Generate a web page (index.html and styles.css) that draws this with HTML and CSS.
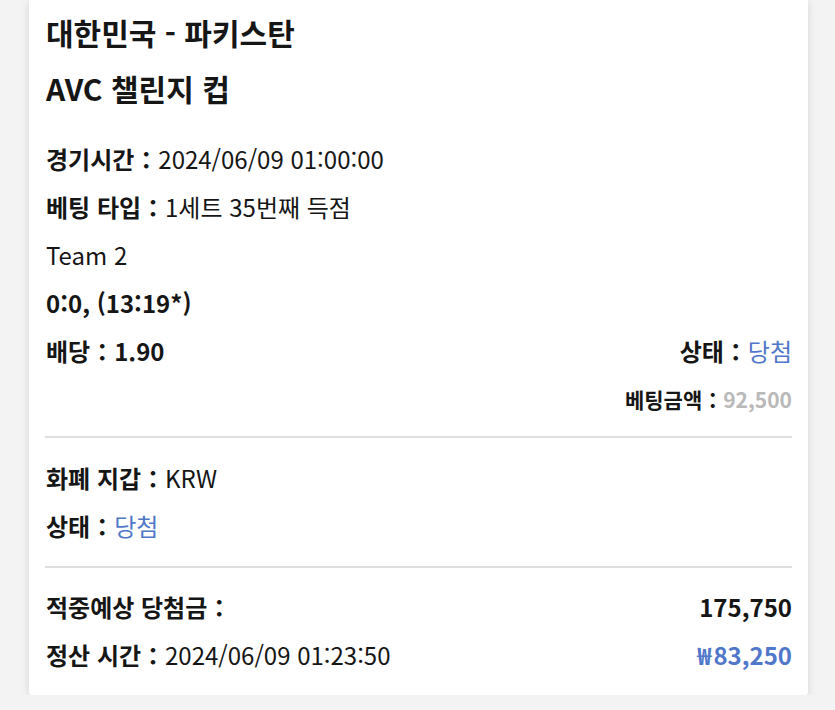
FILE: index.html
```html
<!DOCTYPE html>
<html lang="ko">
<head>
<meta charset="utf-8">
<title>베팅 상세</title>
<link rel="stylesheet" href="styles.css">
</head>
<body>
<div class="card">
  <div class="title">대한민국 - 파키스탄</div>
  <div class="title">AVC 챌린지 컵</div>

  <div class="section first">
    <div class="row"><span class="label">경기시간：</span><span class="val">2024/06/09 01:00:00</span></div>
    <div class="row"><span class="label">베팅 타입：</span><span class="val">1세트 35번째 득점</span></div>
    <div class="row"><span class="val">Team 2</span></div>
    <div class="row"><span class="label">0:0, (13:19*)</span></div>
    <div class="row split"><span class="label">배당：1.90</span><span><span class="label">상태：</span><span class="val blue">당첨</span></span></div>
    <div class="row small right"><span class="label">베팅금액：</span><span class="label gray">92,500</span></div>
  </div>

  <div class="divider"></div>

  <div class="section">
    <div class="row"><span class="label">화폐 지갑：</span><span class="val">KRW</span></div>
    <div class="row"><span class="label">상태：</span><span class="val blue">당첨</span></div>
  </div>

  <div class="divider"></div>

  <div class="section last">
    <div class="row split"><span class="label">적중예상 당첨금：</span><span class="label amount">175,750</span></div>
    <div class="row split"><span><span class="label">정산 시간：</span><span class="val">2024/06/09 01:23:50</span></span><span class="label amount blue"><span class="won">₩</span>83,250</span></div>
  </div>
</div>
</body>
</html>
```

FILE: styles.css
```css
html, body {
  margin: 0;
  padding: 0;
  background: #f3f3f3;
}

body {
  font-family: "Noto Sans CJK KR", "Noto Sans", sans-serif;
  color: #161616;
}

.card {
  margin-left: 29px;
  width: 779px;
  box-sizing: border-box;
  background: #ffffff;
  padding: 4px 16px 16px 16px;
  box-shadow: 0 2px 8px rgba(0, 0, 0, 0.12);
  border-radius: 0 0 3px 3px;
}

.title {
  font-size: 30px;
  font-weight: 700;
  line-height: 56px;
  padding-left: 1px;
}

.section {
  margin-top: 16px;
  margin-bottom: 16px;
}

.section.first {
  margin-top: 19px;
  margin-bottom: 13px;
}

.section.last {
  margin-top: 15px;
  margin-bottom: 0;
}

.row {
  font-size: 24px;
  line-height: 48px;
  height: 48px;
  padding-left: 1px;
  display: flex;
  align-items: center;
}

.row.split {
  justify-content: space-between;
}

.row.right {
  justify-content: flex-end;
}

.row.small {
  font-size: 21px;
}

.label {
  font-weight: 700;
}

.val {
  font-weight: 400;
}

.blue {
  color: #5077c9;
}

.gray {
  color: #b9b9b9;
}

.amount {
  font-weight: 700;
}

.won {
  margin-right: 2px;
}

.divider {
  height: 2px;
  background: #dedede;
}
```
